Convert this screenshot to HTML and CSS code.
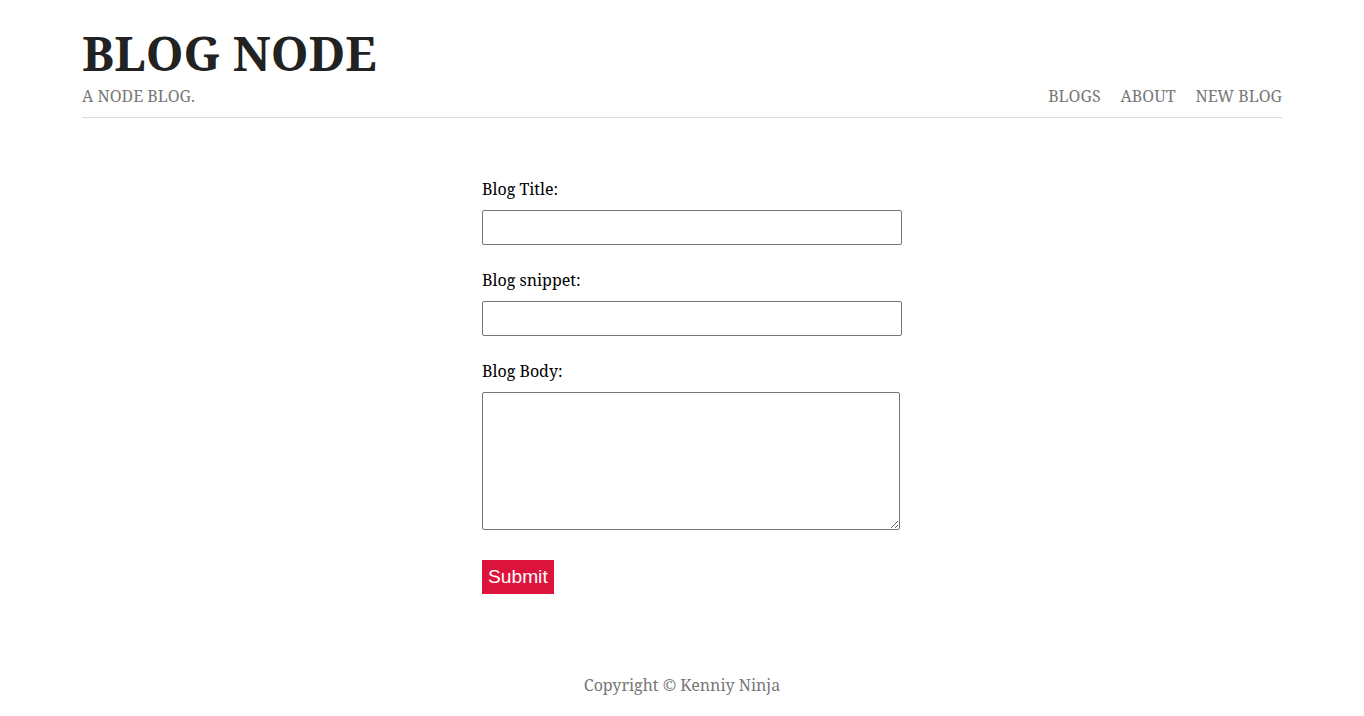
FILE: index.html
```html
<!DOCTYPE html>
<html lang="en">
<head>
<meta charset="utf-8">
<title>Blog Node | Create</title>
<link rel="stylesheet" href="styles.css">
</head>
<body>
<nav class="nav">
  <div class="site-title">
    <h1 class="site-name">BLOG NODE</h1>
    <p class="site-tag">A Node Blog.</p>
  </div>
  <ul class="nav-links">
    <li><a href="#">Blogs</a></li>
    <li><a href="#">About</a></li>
    <li><a href="#">New Blog</a></li>
  </ul>
</nav>
<main class="create-blog">
  <form class="blog-form">
    <label class="field-label" for="title">Blog Title:</label>
    <input class="field-input" type="text" id="title">
    <label class="field-label" for="snippet">Blog snippet:</label>
    <input class="field-input" type="text" id="snippet">
    <label class="field-label" for="body">Blog Body:</label>
    <textarea class="field-area" id="body"></textarea>
    <button class="submit-btn" type="button">Submit</button>
  </form>
</main>
<footer class="footer">Copyright © Kenniy Ninja</footer>
</body>
</html>
```
FILE: styles.css
```css
body {
  max-width: 1200px;
  margin: 20px auto;
  padding: 0;
  font-family: "Noto Serif", "DejaVu Serif", serif;
  color: #000;
}
.nav {
  display: flex;
  justify-content: space-between;
  align-items: flex-end;
  padding-bottom: 10px;
  border-bottom: 1px solid #ddd;
  margin-bottom: 60px;
  text-transform: uppercase;
}
.site-name {
  margin: 0;
  font-size: 48px;
  font-weight: 700;
  color: #222;
  line-height: 1.36;
}
.site-tag {
  margin: 0;
  font-size: 16px;
  color: #777;
}
.nav-links {
  display: flex;
  gap: 20px;
  margin: 0;
  padding: 0;
  list-style: none;
}
.nav-links a {
  color: #777;
  text-decoration: none;
  font-size: 16px;
}
.blog-form {
  width: 400px;
  margin: 0 auto;
  display: flex;
  flex-direction: column;
  align-items: flex-start;
}
.field-label {
  font-size: 16px;
  margin: 0 0 10px;
}
.field-input {
  box-sizing: border-box;
  width: 420px;
  flex-shrink: 0;
  height: 35px;
  margin: 0 0 24px;
  padding: 10px;
  border: 1px solid #767676;
  border-radius: 2px;
}
.field-area {
  box-sizing: border-box;
  width: 418px;
  flex-shrink: 0;
  height: 138px;
  margin: 0;
  padding: 10px;
  border: 1px solid #767676;
  border-radius: 2px;
}
.submit-btn {
  margin-top: 30px;
  background: crimson;
  color: #fff;
  border: 0;
  padding: 6px;
  font-family: "Liberation Sans", Arial, sans-serif;
  font-size: 19.2px;
}
.footer {
  color: #777;
  text-align: center;
  margin-top: 80px;
  font-size: 16px;
}
```
